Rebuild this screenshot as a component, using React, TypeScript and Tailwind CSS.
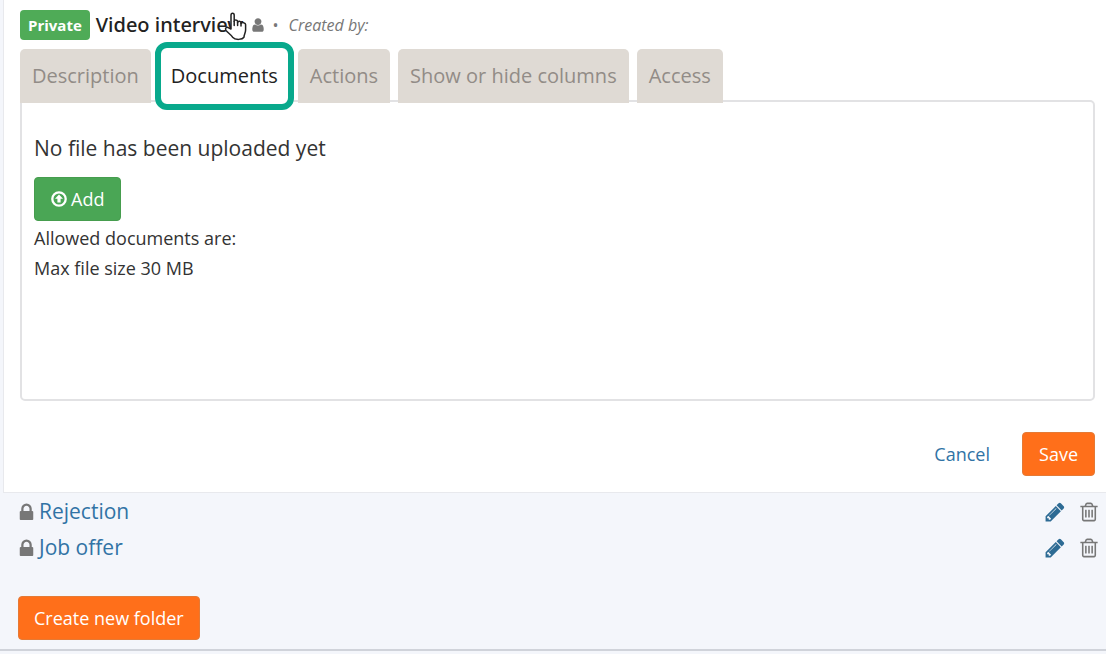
import React, { useState } from 'react';
import clsx from 'clsx';

const TABS = ['Description', 'Documents', 'Actions', 'Show or hide columns', 'Access'];
const FOLDERS = ['Rejection', 'Job offer'];

const ICONS = {
  user: 'M1536 1399q0 109-62.5 187t-150.5 78h-854q-88 0-150.5-78t-62.5-187q0-85 8.5-160.5t31.5-152 58.5-131 94-89 134.5-34.5q131 128 313 128t313-128q76 0 134.5 34.5t94 89 58.5 131 31.5 152 8.5 160.5zm-256-887q0 159-112.5 271.5t-271.5 112.5-271.5-112.5-112.5-271.5 112.5-271.5 271.5-112.5 271.5 112.5 112.5 271.5z',
  lock: 'M640 768h512v-192q0-106-75-181t-181-75-181 75-75 181v192zm832 96v576q0 40-28 68t-68 28h-960q-40 0-68-28t-28-68v-576q0-40 28-68t68-28h32v-192q0-184 132-316t316-132 316 132 132 316v192h32q40 0 68 28t28 68z',
  pencil: 'M491 1536l91-91-235-235-91 91v107h128v128h107zm523-928q0-22-22-22-10 0-17 7l-542 542q-7 7-7 17 0 22 22 22 10 0 17-7l542-542q7-7 7-17zm-54-192l416 416-832 832h-416v-416zm683 96q0 53-37 90l-166 166-416-416 166-165q36-38 90-38 53 0 91 38l235 234q37 39 37 91z',
  trash: 'M704 736v576q0 14-9 23t-23 9h-64q-14 0-23-9t-9-23v-576q0-14 9-23t23-9h64q14 0 23 9t9 23zm256 0v576q0 14-9 23t-23 9h-64q-14 0-23-9t-9-23v-576q0-14 9-23t23-9h64q14 0 23 9t9 23zm256 0v576q0 14-9 23t-23 9h-64q-14 0-23-9t-9-23v-576q0-14 9-23t23-9h64q14 0 23 9t9 23zm128 724v-948h-896v948q0 22 7 40.5t14.5 27 10.5 8.5h832q3 0 10.5-8.5t14.5-27 7-40.5zm-672-1076h448l-48-117q-7-9-17-11h-317q-10 2-17 11zm928 32v64q0 14-9 23t-23 9h-96v948q0 83-47 143.5t-113 60.5h-832q-66 0-113-58.5t-47-141.5v-952h-96q-14 0-23-9t-9-23v-64q0-14 9-23t23-9h309l70-167q15-37 54-63t79-26h320q40 0 79 26t54 63l70 167h309q14 0 23 9t9 23z',
};

function Icon({ name, className }: { name: keyof typeof ICONS; className: string }) {
  return (
    <svg viewBox="0 0 1792 1792" fill="currentColor" className={className} aria-hidden="true">
      <path d={ICONS[name]} />
    </svg>
  );
}

function UploadIcon() {
  return (
    <svg viewBox="0 0 16 16" className="size-4" aria-hidden="true">
      <circle cx="8" cy="8" r="6.7" fill="none" stroke="currentColor" strokeWidth="2.3" />
      <path d="M8 3.6l4 4.2H9.6v3.8H6.4V7.8H4z" fill="currentColor" />
    </svg>
  );
}

function HandPointer() {
  return (
    <svg viewBox="0 0 26 30" className="absolute left-[218px] top-3 h-[30px] w-[26px]" aria-hidden="true">
      <path
        d="M9 17V3.4C9 .6 12.2.6 12.2 3.4V9.4c0-2 3.4-2 3.4.2v.8c.4-1.8 3.4-1.6 3.4.4v.8c.8-1.6 4.6-1.2 4.6 1V18c0 3-1.6 4.4-1.6 7.2-1.6 2.8-9 3-11.4 0C9.2 22.6 6 21 4 18.4c-1.4-2.2.6-4 2.6-2.6z"
        fill="#fff"
        stroke="#222"
        strokeWidth="1.5"
        strokeLinejoin="round"
      />
      <path d="M12.2 9.4v4M15.6 10v3.5M19 11v3" stroke="#222" strokeWidth="1.5" strokeLinecap="round" />
    </svg>
  );
}

export default function App() {
  const [activeTab, setActiveTab] = useState('Documents');

  return (
    <div className="min-h-screen bg-[#f4f6fb] font-['Open_Sans','Noto_Sans',sans-serif] text-[#333]">
      <main className="border-b-2 border-[#d0d3da] pb-[9px]">
        {/* Folder editor */}
        <section className="relative ml-[3px] border-b border-l border-[#e8e9ed] bg-white pb-4 pl-4 pr-[11px] pt-2">
          <header className="flex h-[33px] items-center">
            <span className="rounded bg-[#4fab57] px-2 text-[15px] leading-[30px] font-bold text-white">Private</span>
            <h1 className="ml-[6px] font-['Noto_Sans','Open_Sans',sans-serif] text-xl leading-[30px] font-medium text-[#222]">Video interview</h1>
            <Icon name="user" className="ml-[7px] size-4 text-[#777]" />
            <span className="ml-[6px] text-base text-[#777]">•</span>
            <em className="ml-[10px] text-base text-[#777]">Created by:</em>
          </header>

          {/* Tabs */}
          <div role="tablist" className="relative z-10 mt-2 flex gap-2">
            {TABS.map((tab) => (
              <button
                key={tab}
                type="button"
                role="tab"
                aria-selected={activeTab === tab}
                onClick={() => setActiveTab(tab)}
                className={clsx(
                  'relative h-[54px] rounded-t-[5px] px-3 text-xl',
                  activeTab === tab ? 'bg-white text-[#222]' : 'bg-[#dfdad4] text-[#928c87]'
                )}
              >
                {tab}
                {activeTab === tab && (
                  <span className="absolute -inset-x-1 -top-[7px] -bottom-[7px] rounded-xl border-[6px] border-[#08a98c]" />
                )}
              </button>
            ))}
          </div>

          <div role="tabpanel" className="-mt-[3px] min-h-[301px] rounded-b-[5px] rounded-tr-[5px] border-2 border-[#e2e2e4] px-3 pt-[31px]">
            <p className="text-[21px] leading-[30px]">No file has been uploaded yet</p>
            <button
              type="button"
              className="mt-[14px] flex h-11 items-center gap-1 rounded border border-[#469d4e] bg-[#4aa655] px-4 text-lg text-white"
            >
              <UploadIcon />
              Add
            </button>
            <p className="mt-[2px] text-lg leading-[30px]">Allowed documents are:</p>
            <p className="text-lg leading-[30px]">Max file size 30 MB</p>
          </div>

          <div className="mt-[31px] flex justify-end gap-4">
            <button type="button" className="h-11 px-4 text-lg text-[#3173a5]">Cancel</button>
            <button type="button" className="h-11 rounded border border-[#e57a35] bg-[#ff6f1a] px-4 text-lg text-white">Save</button>
          </div>

          <HandPointer />
        </section>

        {/* Other folders */}
        <ul className="pl-4 pr-[6px] pt-px">
          {FOLDERS.map((folder) => (
            <li key={folder} className="flex h-9 items-center gap-[2px]">
              <Icon name="lock" className="size-[21px] text-[#777]" />
              <a href="#" className="text-[21px] text-[#3173a5]">{folder}</a>
              <button type="button" aria-label={`Edit ${folder}`} className="ml-auto text-[#2d6b94]">
                <Icon name="pencil" className="size-[22px]" />
              </button>
              <button type="button" aria-label={`Delete ${folder}`} className="ml-[10px] text-[#777]">
                <Icon name="trash" className="size-[22px]" />
              </button>
            </li>
          ))}
        </ul>

        <button
          type="button"
          className="mt-[30px] ml-[18px] block h-11 rounded border border-[#e57a35] bg-[#ff6f1a] px-[15px] text-lg text-white"
        >
          Create new folder
        </button>
      </main>
    </div>
  );
}
